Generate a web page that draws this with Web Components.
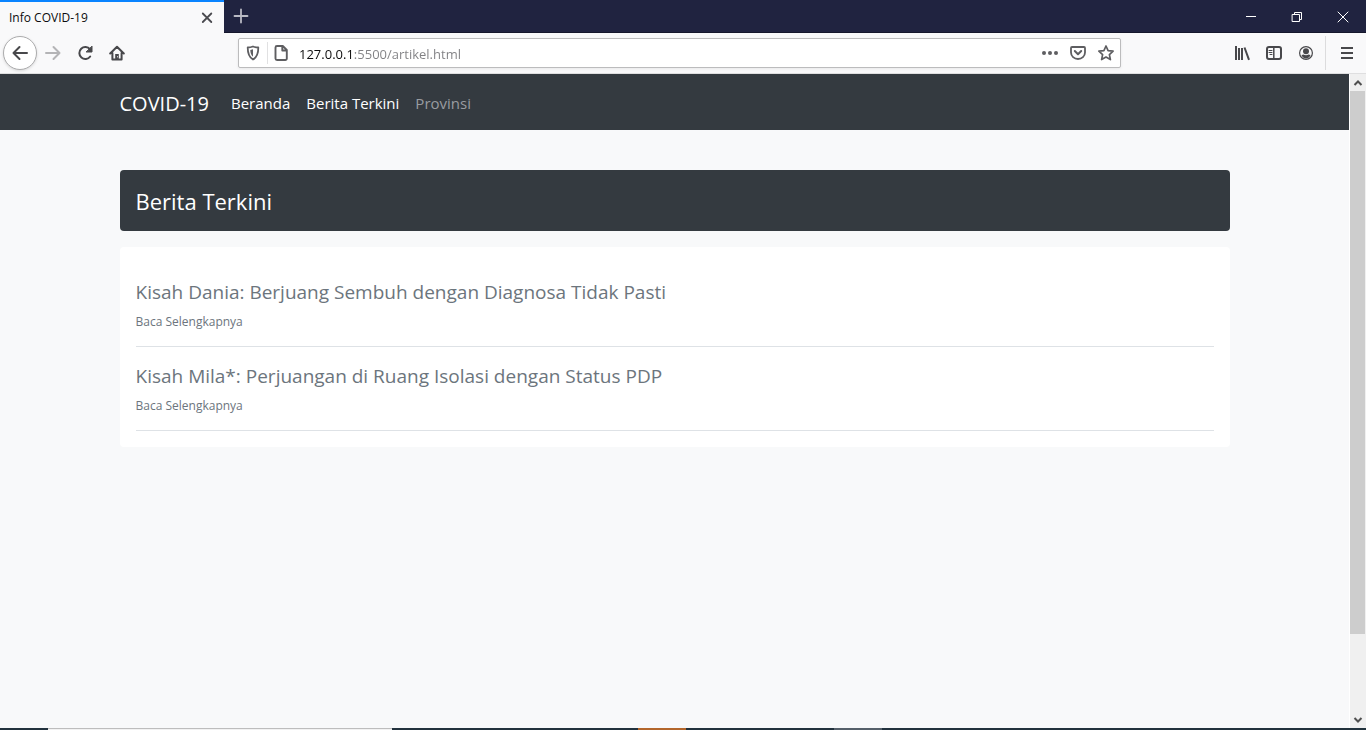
<!DOCTYPE html>
<html lang="id">
<head>
<meta charset="utf-8">
<meta name="viewport" content="width=device-width, initial-scale=1">
<title>Info COVID-19</title>
<style>
  html, body { height: 100%; margin: 0; }
  body { font-family: "Segoe UI", "Open Sans", "Noto Sans", sans-serif; font-size: 15px; overflow: hidden; }
</style>
</head>
<body>
<browser-window>
  <tab-strip slot="chrome" label="Info COVID-19"></tab-strip>
  <tool-bar slot="chrome" address="127.0.0.1:5500/artikel.html"></tool-bar>
  <site-nav brand="COVID-19">
    <nav-link href="#beranda" active>Beranda</nav-link>
    <nav-link href="#berita" active>Berita Terkini</nav-link>
    <nav-link href="#provinsi">Provinsi</nav-link>
  </site-nav>
  <news-list heading="Berita Terkini">
    <news-item href="#dania">Kisah Dania: Berjuang Sembuh dengan Diagnosa Tidak Pasti</news-item>
    <news-item href="#mila">Kisah Mila*: Perjuangan di Ruang Isolasi dengan Status PDP</news-item>
  </news-list>
  <scroll-bar slot="scroll"></scroll-bar>
  <task-bar slot="taskbar"></task-bar>
</browser-window>

<script>
  const define = (name, render) => customElements.define(name, class extends HTMLElement {
    constructor() { super(); this.attachShadow({ mode: 'open' }); }
    connectedCallback() { this.shadowRoot.innerHTML = render(this); }
  });

  const iconButton = (label, cls, paths) =>
    `<button type="button" class="${cls}" aria-label="${label}"><svg viewBox="0 0 16 16" width="16" height="16" fill="none" stroke="currentColor" stroke-width="2" stroke-linecap="round" stroke-linejoin="round">${paths}</svg></button>`;

  const buttonReset = `button { display: grid; place-items: center; margin: 0; padding: 0; border: 0; background: none; color: inherit; font: inherit; } svg { display: block; }`;

  define('browser-window', () => `
    <style>
      :host { display: flex; flex-direction: column; height: 100vh; }
      .view { flex: 1; min-height: 0; display: grid; grid-template-columns: minmax(0, 1fr) 17px; }
      .page { overflow: hidden; background: #f8f9fa; }
    </style>
    <slot name="chrome"></slot>
    <div class="view"><div class="page"><slot></slot></div><slot name="scroll"></slot></div>
    <slot name="taskbar"></slot>`);

  define('tab-strip', el => `
    <style>
      :host { display: flex; height: 33px; background: #202340; color: #fff; box-shadow: inset 0 -1px #15172c; }
      ${buttonReset}
      .tab { display: flex; align-items: center; justify-content: space-between; box-sizing: border-box; width: 224px; padding: 0 9px; border-top: 2px solid #0a84ff; background: #f9f9fa; color: #0c0c0d; font-size: 12px; }
      .tab button { color: #4a4a4f; }
      .new { width: 34px; height: 32px; color: #b9bac4; }
      .controls { display: flex; margin-left: auto; }
      .controls button { width: 46px; }
    </style>
    <div class="tab"><span>${el.getAttribute('label')}</span>
      ${iconButton('Tutup tab', '', '<path stroke-width="1.8" d="M3.800 3.500l8.500 8.500m0-8.500l-8.500 8.500"/>')}</div>
    ${iconButton('Tab baru', 'new', '<path stroke-width="1.8" d="M8 1.500v13M1.500 8h13"/>')}
    <div class="controls">
      ${iconButton('Kecilkan', '', '<path stroke-width="1" stroke-linecap="butt" d="M3 7.500h10"/>')}
      ${iconButton('Pulihkan', '', '<path stroke-width="1" stroke-linejoin="miter" d="M3.500 5.500h7v7h-7zM5.500 5.500v-2h7v7h-2"/>')}
      ${iconButton('Tutup', '', '<path stroke-width="1" d="M3 3l10 10m0-10L3 13"/>')}
    </div>`);

  define('tool-bar', el => `
    <style>
      :host { display: flex; align-items: center; box-sizing: border-box; height: 41px; padding: 0 3px; border-bottom: 1px solid #dfdfe0; background: #f9f9fa; color: #48484b; }
      ${buttonReset}
      button { flex: none; width: 32px; height: 32px; }
      .back { box-sizing: border-box; width: 34px; height: 34px; border: 1px solid #acacad; border-radius: 50%; background: #fff; box-shadow: 0 1px 3px #0002; }
      .forward { color: #b4b4b6; }
      .address { flex: 1; display: flex; align-items: center; box-sizing: border-box; height: 30px; margin: 0 105px; border: 1px solid #bcbcbd; border-radius: 2px; background: #fff; box-shadow: 0 1px 3px #0001; color: #5e5e61; }
      .address button { width: 28px; height: 28px; }
      .divider { width: 1px; height: 22px; margin-right: -1px; background: #e1e1e2; }
      input { flex: 1; min-width: 0; height: 28px; margin: 0; padding: 2px 4px 0; border: 0; outline: 0; font: 13px "Segoe UI", "Open Sans", "Noto Sans", sans-serif;
        background: linear-gradient(90deg, #0c0c0d 59px, #808083 59px); background-clip: text; -webkit-background-clip: text; -webkit-text-fill-color: transparent; }
      .menu { width: 38px; height: 34px; margin-left: 3px; border-left: 1px solid #dcdcdd; padding-left: 4px; }
    </style>
    ${iconButton('Kembali', 'back', '<path d="M15 8H1.500M7.500 2l-6 6 6 6"/>')}
    ${iconButton('Maju', 'forward', '<path d="M1 8h13.500M8.500 2l6 6-6 6"/>')}
    ${iconButton('Muat ulang', '', '<path d="M13.200 11.500A6 6 0 1 1 13 4.200"/><path fill="currentColor" stroke-width="1" d="M15 1.500v5.500H9.500z"/>')}
    ${iconButton('Beranda', '', '<path stroke-width="2" d="M1.200 8.500L8 1.700l6.800 6.800M3.400 8v6.600h9.200V8"/><path fill="currentColor" stroke="none" d="M6.200 14V9h3.600v5z"/><path stroke="#f9f9fa" stroke-width=".8" d="M8.500 11.500v.5"/>')}
    <div class="address" role="search">
      ${iconButton('Perlindungan', '', '<path stroke-width="1.800" d="M8 1.500c2 .8 3.500 1 5.300 1 0 5.500-.8 9.500-5.300 12-4.500-2.500-5.300-6.500-5.300-12 1.800 0 3.300-.2 5.300-1z"/><path fill="currentColor" stroke="none" d="M8 4.200v7.500C6.200 10.200 5.400 8 5.300 4.900z"/>')}
      <span class="divider"></span>
      ${iconButton('Info situs', '', '<path stroke-width="1.900" d="M4 1h5.800l4 4v8.500a1.500 1.500 0 0 1-1.500 1.500H4a1.500 1.500 0 0 1-1.500-1.500v-11A1.500 1.500 0 0 1 4 1zM9.300 1.500V5.500h4"/>')}
      <input type="text" aria-label="Alamat" value="${el.getAttribute('address')}">
      ${iconButton('Tindakan', '', '<g fill="currentColor" stroke="none"><circle cx="2" cy="8" r="2"/><circle cx="8" cy="8" r="2"/><circle cx="14" cy="8" r="2"/></g>')}
      ${iconButton('Simpan ke Pocket', '', '<path stroke-width="1.800" d="M2 2h12q1 0 1 1v4.500a7 6.500 0 0 1-14 0V3q0-1 1-1z"/><path d="M4.800 6L8 9.200 11.200 6"/>')}
      ${iconButton('Markah', '', '<path stroke-width="1.700" d="M8 1l2.100 4.600 5 .6-3.700 3.400 1 5L8 12.100l-4.400 2.500 1-5L.9 6.200l5-.6z"/>')}
    </div>
    ${iconButton('Pustaka', '', '<path stroke-linecap="butt" d="M2 1v14M5 3v12M8 3v12M10.500 2.500l4.500 12.300"/>')}
    ${iconButton('Bilah samping', '', '<rect x="1" y="2" width="14" height="12" rx="2"/><path stroke-width="1.500" d="M7.800 2v12"/><path stroke-width="1" d="M3 5.500h3M3 7.500h3M4 9.500h2"/>')}
    ${iconButton('Akun', '', '<circle cx="8" cy="8" r="6.400" stroke-width="1.200"/><g fill="currentColor" stroke="none"><circle cx="8" cy="6.300" r="3"/><path d="M3.500 10q1.200 0 2-.4 2.500 1.500 5 0 .8.400 2 .4-1.200 3.400-4.500 3.400T3.500 10z"/></g>')}
    ${iconButton('Menu', 'menu', '<path stroke-linecap="butt" d="M2 3h12M2 8h12M2 13h12"/>')}`);

  define('site-nav', el => `
    <style>
      :host { display: block; background: #343a40; }
      nav { display: flex; align-items: center; box-sizing: border-box; max-width: 1110px; height: 56px; margin: 0 auto; padding-top: 2px; }
      .brand { margin-right: 14px; color: #fff; font-size: 20px; text-decoration: none; }
    </style>
    <nav aria-label="Utama"><a class="brand" href="#">${el.getAttribute('brand')}</a><slot></slot></nav>`);

  define('nav-link', el => `
    <style>
      :host { display: block; color: #999ca0; }
      :host([active]) { color: #fff; }
      a { display: block; padding: 8px; color: inherit; line-height: 24px; text-decoration: none; }
    </style>
    <a href="${el.getAttribute('href')}"><slot></slot></a>`);

  define('news-list', el => `
    <style>
      :host { display: flex; flex-direction: column; gap: 16px; max-width: 1110px; margin: 40px auto 0; }
      h1 { margin: 0; padding: 17px 16px 15px; border-radius: 4px; background: #343a40; color: #fff; font-size: 22px; font-weight: 400; line-height: 29px; }
      section { padding: 16px; border-radius: 4px; background: #fff; }
    </style>
    <h1>${el.getAttribute('heading')}</h1>
    <section><slot></slot></section>`);

  define('news-item', el => `
    <style>
      :host { display: block; padding: 17px 0 15px; border-bottom: 1px solid #dee2e6; color: #6c757d; }
      h2 { margin: 0 0 8px; font-size: 19px; font-weight: 400; line-height: 24px; }
      a { display: block; width: fit-content; color: inherit; font-size: 12px; line-height: 19px; text-decoration: none; }
    </style>
    <h2><slot></slot></h2>
    <a href="${el.getAttribute('href')}">Baca Selengkapnya</a>`);

  define('scroll-bar', () => `
    <style>
      :host { display: flex; flex-direction: column; box-sizing: border-box; border-left: 1px solid #fff; background: #f0f0f0; color: #505050; }
      ${buttonReset}
      button { height: 17px; }
      .track { flex: 1; display: grid; grid-template-rows: 7fr 1fr; padding-right: 1px; }
      .thumb { background: #cdcdcd; }
    </style>
    ${iconButton('Gulir ke atas', '', '<path stroke-linecap="butt" stroke-linejoin="miter" d="M4.500 10L8 6.500l3.500 3.500"/>')}
    <div class="track"><div class="thumb"></div></div>
    ${iconButton('Gulir ke bawah', '', '<path stroke-linecap="butt" stroke-linejoin="miter" d="M4.500 6L8 9.500 11.500 6"/>')}`);

  define('task-bar', () => `
    <style>
      :host { display: grid; grid-template-columns: 48px 344px 246px 48px 148px 48px 1fr; flex: none; height: 2px; background: #22323d; }
      .search { grid-column: 2; box-sizing: border-box; border-top: 1px solid #bdbdbd; background: #f2f2f2; }
      .app { grid-column: 4; background: #b3662b; }
      .open { grid-column: 6; background: #55606a; }
    </style>
    <div class="search"></div><div class="app"></div><div class="open"></div>`);
</script>
</body>
</html>
